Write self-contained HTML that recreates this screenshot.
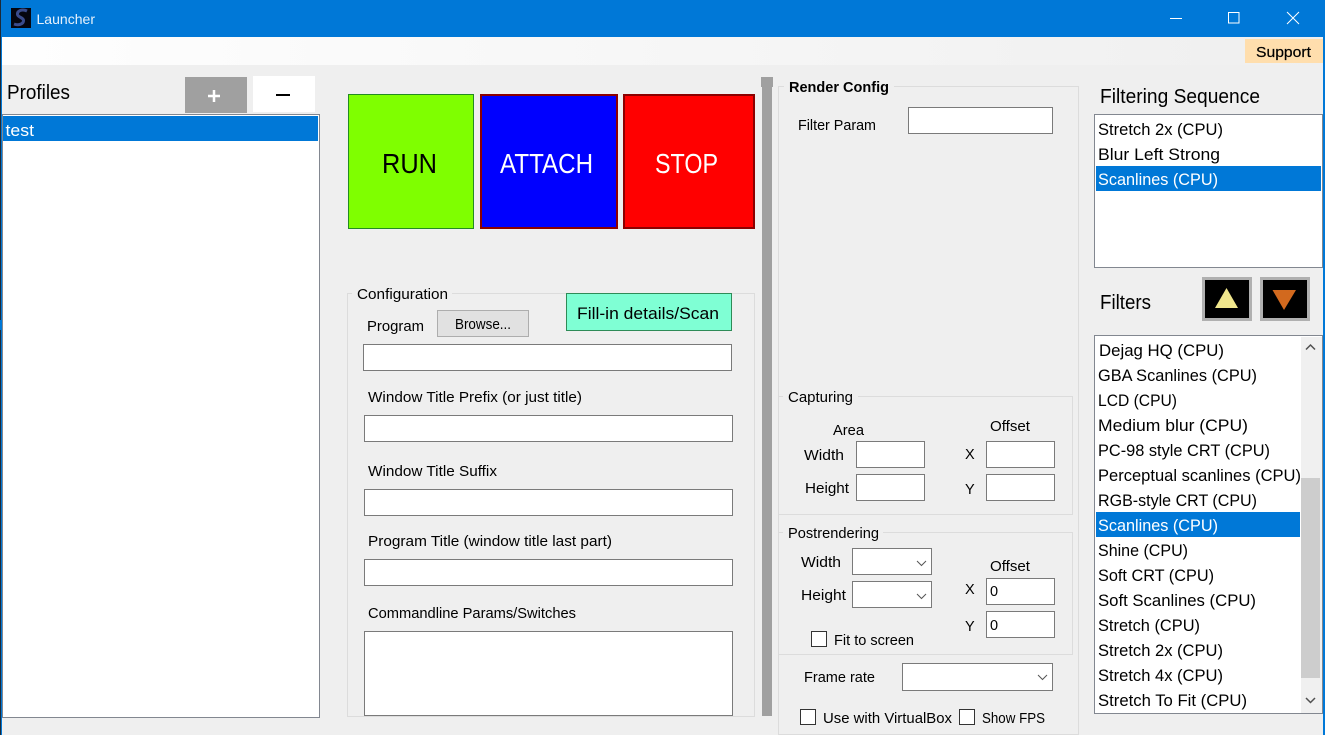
<!DOCTYPE html>
<html><head><meta charset="utf-8"><title>Launcher</title>
<style>
html,body{margin:0;padding:0;background:#efefef;overflow:hidden}
svg{display:block;position:absolute;left:0;top:0}
text{font-family:"Liberation Sans",Arial,sans-serif;font-size:14.5px;fill:#000}
.l{font-size:16.5px}.h{font-size:20px}.b{font-size:28px}
.i{fill:#fff;stroke:#7a7a7a;stroke-width:1}
.g{fill:none;stroke:#dcdcdc;stroke-width:1}
.k{fill:#fff;stroke:#333;stroke-width:1}
.lab{fill:#efefef}
</style></head><body>
<svg width="1325" height="735" viewBox="0 0 1325 735" xmlns="http://www.w3.org/2000/svg">
<rect width="1325" height="735" fill="#efefef"/>
<defs><linearGradient id="m" x1="0" x2="1" y1="0" y2="0"><stop offset="0" stop-color="#fefefe"/><stop offset="1" stop-color="#efefef"/></linearGradient></defs>
<rect x="0" y="37" width="1325" height="28" fill="url(#m)"/>
<rect x="0" y="0" width="1325" height="37" fill="#0078d7"/>
<rect x="1" y="37" width="1" height="698" fill="#0078d7"/>
<rect x="0" y="0" width="1" height="735" fill="#1c2a38"/>
<rect x="0" y="320" width="1" height="10" fill="#0078d7"/>
<rect x="1323" y="37" width="2" height="698" fill="#0078d7"/>
<rect x="11" y="8" width="20" height="20" fill="#05060f"/>
<path d="M27 11C22 8.500 17 11 17.500 14.500C18 17.500 24 17.500 23.500 21C23 24.500 18 25.500 14 24" fill="none" stroke="#3a4c8c" stroke-width="3"/>
<text x="36.500" y="24" style="font-size:14px;fill:#e6f1fb" textLength="58.500" lengthAdjust="spacingAndGlyphs">Launcher</text>
<path d="M1170 18.500H1182" stroke="#fff" fill="none"/>
<rect x="1228.500" y="12.500" width="10.500" height="10.500" fill="none" stroke="#fff"/>
<path d="M1287 12L1299 24M1299 12L1287 24" stroke="#fff" fill="none"/>
<rect x="1245" y="39" width="78" height="24" fill="#ffdead"/>
<text x="1256" y="57" textLength="55" lengthAdjust="spacingAndGlyphs" stroke="#000" stroke-width=".2">Support</text>

<!-- Profiles -->
<text x="7" y="99" class="h" textLength="63" lengthAdjust="spacingAndGlyphs">Profiles</text>
<rect x="185" y="77" width="62" height="36" fill="#a0a0a0"/>
<path d="M208 96H220M214 90V102" stroke="#fff" stroke-width="2.500" fill="none"/>
<rect x="253" y="76" width="62" height="36" fill="#fff"/>
<path d="M276 95H290" stroke="#000" stroke-width="2" fill="none"/>
<rect x="2.500" y="114.500" width="317" height="603" fill="#fff" stroke="#828790"/>
<rect x="3" y="116" width="315" height="25" fill="#0078d7"/>
<text x="5.500" y="136" class="l" style="fill:#fff" textLength="28.500" lengthAdjust="spacingAndGlyphs">test</text>

<!-- Action buttons -->
<rect x="348.500" y="94.500" width="125" height="134" fill="#7fff00" stroke="#228b22"/>
<text x="382" y="173" class="b" textLength="55" lengthAdjust="spacingAndGlyphs">RUN</text>
<rect x="481" y="95" width="136" height="133" fill="#0000ff" stroke="#8b0000" stroke-width="2"/>
<text x="500" y="173" class="b" style="fill:#fff" textLength="93" lengthAdjust="spacingAndGlyphs">ATTACH</text>
<rect x="624" y="95" width="130" height="133" fill="#ff0000" stroke="#8b0000" stroke-width="2"/>
<text x="655" y="173" class="b" style="fill:#fff" textLength="63" lengthAdjust="spacingAndGlyphs">STOP</text>

<!-- Configuration -->
<rect x="347.500" y="293.500" width="407" height="423" class="g"/>
<rect x="352" y="288" width="100" height="10" class="lab"/>
<text x="357" y="299" textLength="91" lengthAdjust="spacingAndGlyphs">Configuration</text>
<rect x="566.500" y="293.500" width="165" height="37" fill="#7fffd4" stroke="#2e8b57"/>
<text x="577" y="319" class="l" textLength="142" lengthAdjust="spacingAndGlyphs">Fill-in details/Scan</text>
<text x="367" y="331" textLength="57" lengthAdjust="spacingAndGlyphs">Program</text>
<rect x="437.500" y="310.500" width="91" height="26" fill="#e1e1e1" stroke="#adadad"/>
<text x="455" y="329" textLength="56" lengthAdjust="spacingAndGlyphs">Browse...</text>
<rect x="363.500" y="344.500" width="368" height="26" class="i"/>
<text x="368" y="402" textLength="214" lengthAdjust="spacingAndGlyphs">Window Title Prefix (or just title)</text>
<rect x="364.500" y="415.500" width="368" height="26" class="i"/>
<text x="368" y="476" textLength="129" lengthAdjust="spacingAndGlyphs">Window Title Suffix</text>
<rect x="364.500" y="489.500" width="368" height="26" class="i"/>
<text x="368" y="546" textLength="244" lengthAdjust="spacingAndGlyphs">Program Title (window title last part)</text>
<rect x="364.500" y="559.500" width="368" height="26" class="i"/>
<text x="368" y="618" textLength="208" lengthAdjust="spacingAndGlyphs">Commandline Params/Switches</text>
<rect x="364.500" y="631.500" width="368" height="84" class="i"/>

<!-- Splitter -->
<rect x="762" y="87" width="10" height="629" fill="#a0a0a0"/>
<rect x="761" y="77" width="12" height="10" fill="#a0a0a0"/>

<!-- Render config -->
<rect x="778.500" y="86.500" width="300" height="648" class="g"/>
<rect x="784" y="80" width="110" height="12" class="lab"/>
<text x="789" y="92" textLength="100" lengthAdjust="spacingAndGlyphs" style="font-weight:bold">Render Config</text>
<text x="798" y="130" textLength="78" lengthAdjust="spacingAndGlyphs">Filter Param</text>
<rect x="908.500" y="107.500" width="144" height="26" class="i"/>

<!-- Capturing -->
<rect x="778.500" y="396.500" width="294" height="118" class="g"/>
<rect x="783" y="390" width="75" height="12" class="lab"/>
<text x="788" y="402" textLength="65" lengthAdjust="spacingAndGlyphs">Capturing</text>
<text x="833" y="435" textLength="31" lengthAdjust="spacingAndGlyphs">Area</text>
<text x="990" y="431" textLength="40" lengthAdjust="spacingAndGlyphs">Offset</text>
<text x="804" y="460" textLength="40" lengthAdjust="spacingAndGlyphs">Width</text>
<rect x="856.500" y="441.500" width="68" height="26" class="i"/>
<text x="805" y="493" textLength="44" lengthAdjust="spacingAndGlyphs">Height</text>
<rect x="856.500" y="474.500" width="68" height="26" class="i"/>
<text x="965" y="459">X</text>
<rect x="986.500" y="441.500" width="68" height="26" class="i"/>
<text x="965" y="494">Y</text>
<rect x="986.500" y="474.500" width="68" height="26" class="i"/>

<!-- Postrendering -->
<rect x="778.500" y="532.500" width="294" height="122" class="g"/>
<rect x="783" y="526" width="100" height="12" class="lab"/>
<text x="788" y="538" textLength="91" lengthAdjust="spacingAndGlyphs">Postrendering</text>
<text x="801" y="567" textLength="40" lengthAdjust="spacingAndGlyphs">Width</text>
<rect x="852.500" y="548.500" width="79" height="26" class="i"/>
<path d="M917 561L921.500 565.500L926 561" fill="none" stroke="#555"/>
<text x="801" y="600" textLength="45" lengthAdjust="spacingAndGlyphs">Height</text>
<rect x="852.500" y="581.500" width="79" height="26" class="i"/>
<path d="M917 594L921.500 598.500L926 594" fill="none" stroke="#555"/>
<text x="990" y="571" textLength="40" lengthAdjust="spacingAndGlyphs">Offset</text>
<text x="965" y="594">X</text>
<rect x="986.500" y="578.500" width="68" height="26" class="i"/>
<text x="990" y="596">0</text>
<text x="965" y="631">Y</text>
<rect x="986.500" y="611.500" width="68" height="26" class="i"/>
<text x="990" y="630">0</text>
<rect x="811.500" y="631.500" width="15" height="15" class="k"/>
<text x="834" y="645" textLength="80" lengthAdjust="spacingAndGlyphs">Fit to screen</text>

<text x="804" y="682" textLength="71" lengthAdjust="spacingAndGlyphs">Frame rate</text>
<rect x="902.500" y="663.500" width="150" height="27" class="i"/>
<path d="M1038 675L1042.500 679.500L1047 675" fill="none" stroke="#555"/>
<rect x="800.500" y="709.500" width="15" height="15" class="k"/>
<text x="823" y="723" textLength="129" lengthAdjust="spacingAndGlyphs">Use with VirtualBox</text>
<rect x="959.500" y="709.500" width="15" height="15" class="k"/>
<text x="982" y="723" textLength="63" lengthAdjust="spacingAndGlyphs">Show FPS</text>

<!-- Filtering sequence -->
<text x="1100" y="103" class="h" textLength="160" lengthAdjust="spacingAndGlyphs">Filtering Sequence</text>
<rect x="1094.500" y="114.500" width="228" height="153" fill="#fff" stroke="#828790"/>
<rect x="1096" y="166" width="225" height="25" fill="#0078d7"/>
<text x="1098" y="135" class="l" textLength="125" lengthAdjust="spacingAndGlyphs">Stretch 2x (CPU)</text>
<text x="1098" y="160" class="l" textLength="122" lengthAdjust="spacingAndGlyphs">Blur Left Strong</text>
<text x="1098" y="185" class="l" style="fill:#fff" textLength="120" lengthAdjust="spacingAndGlyphs">Scanlines (CPU)</text>

<!-- Filters -->
<text x="1100" y="309" class="h" textLength="51" lengthAdjust="spacingAndGlyphs">Filters</text>
<rect x="1203.500" y="278.500" width="47" height="41" fill="#000" stroke="#b0b0b0" stroke-width="3"/>
<path d="M1215 308H1238L1226.500 288Z" fill="#f0e68c"/>
<rect x="1261.500" y="278.500" width="47" height="41" fill="#000" stroke="#b0b0b0" stroke-width="3"/>
<path d="M1272.500 290H1296L1284 310Z" fill="#d2691e"/>

<rect x="1094.500" y="335.500" width="228" height="378" fill="#fff" stroke="#828790"/>
<rect x="1301" y="337" width="21" height="376" fill="#f0f0f0"/>
<rect x="1301" y="478" width="19" height="200" fill="#cdcdcd"/>
<path d="M1306 349.500L1310.500 345L1315 349.500" fill="none" stroke="#505050" stroke-width="1.500"/>
<path d="M1306 698L1310.500 702.500L1315 698" fill="none" stroke="#505050" stroke-width="1.500"/>
<rect x="1096" y="512" width="204" height="25" fill="#0078d7"/>
<text x="1099" y="356" class="l" textLength="125" lengthAdjust="spacingAndGlyphs">Dejag HQ (CPU)</text>
<text x="1098" y="381" class="l" textLength="159" lengthAdjust="spacingAndGlyphs">GBA Scanlines (CPU)</text>
<text x="1098" y="406" class="l" textLength="79" lengthAdjust="spacingAndGlyphs">LCD (CPU)</text>
<text x="1098" y="431" class="l" textLength="150" lengthAdjust="spacingAndGlyphs">Medium blur (CPU)</text>
<text x="1098" y="456" class="l" textLength="172" lengthAdjust="spacingAndGlyphs">PC-98 style CRT (CPU)</text>
<text x="1098" y="481" class="l" textLength="203" lengthAdjust="spacingAndGlyphs">Perceptual scanlines (CPU)</text>
<text x="1098" y="506" class="l" textLength="159" lengthAdjust="spacingAndGlyphs">RGB-style CRT (CPU)</text>
<text x="1098" y="531" class="l" style="fill:#fff" textLength="120" lengthAdjust="spacingAndGlyphs">Scanlines (CPU)</text>
<text x="1098" y="556" class="l" textLength="90" lengthAdjust="spacingAndGlyphs">Shine (CPU)</text>
<text x="1098" y="581" class="l" textLength="116" lengthAdjust="spacingAndGlyphs">Soft CRT (CPU)</text>
<text x="1098" y="606" class="l" textLength="158" lengthAdjust="spacingAndGlyphs">Soft Scanlines (CPU)</text>
<text x="1098" y="631" class="l" textLength="102" lengthAdjust="spacingAndGlyphs">Stretch (CPU)</text>
<text x="1098" y="656" class="l" textLength="125" lengthAdjust="spacingAndGlyphs">Stretch 2x (CPU)</text>
<text x="1098" y="681" class="l" textLength="125" lengthAdjust="spacingAndGlyphs">Stretch 4x (CPU)</text>
<text x="1098" y="706" class="l" textLength="149" lengthAdjust="spacingAndGlyphs">Stretch To Fit (CPU)</text>
</svg>
</body></html>
